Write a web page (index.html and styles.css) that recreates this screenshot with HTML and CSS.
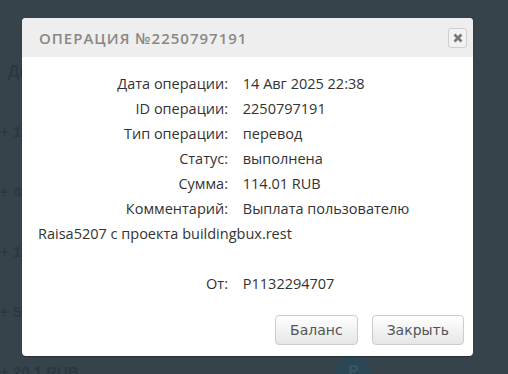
FILE: index.html
```html
<!DOCTYPE html>
<html lang="ru">
<head>
<meta charset="utf-8">
<title>Операция</title>
<link rel="stylesheet" href="styles.css">
</head>
<body>
<div class="page">
  <div class="bg-title">Дневник</div>
  <ul class="bg-list">
    <li>+ 114.01 RUB</li>
    <li>+ 45.2 RUB</li>
    <li>+ 114.01 RUB</li>
    <li>+ 55.1 RUB</li>
    <li>+ 20.1 RUB</li>
  </ul>
  <div class="bg-avatar">P</div>
</div>

<div class="modal">
  <div class="modal-header">
    <h3 class="modal-title">Операция №2250797191</h3>
    <button class="close" type="button" aria-label="Закрыть">
      <svg width="10" height="10" viewBox="0 0 10 10"><path d="M1.5 1.5 L8.5 8.5 M8.5 1.5 L1.5 8.5" stroke="#777" stroke-width="2.6" stroke-linecap="butt"/></svg>
    </button>
  </div>
  <div class="modal-body">
    <div class="row"><span class="label">Дата операции:</span> <span class="value">14 Авг 2025 22:38</span></div>
    <div class="row"><span class="label">ID операции:</span> <span class="value">2250797191</span></div>
    <div class="row"><span class="label">Тип операции:</span> <span class="value">перевод</span></div>
    <div class="row"><span class="label">Статус:</span> <span class="value">выполнена</span></div>
    <div class="row"><span class="label">Сумма:</span> <span class="value">114.01 RUB</span></div>
    <div class="row"><span class="label">Комментарий:</span> <span class="value">Выплата пользователю Raisa5207 с проекта buildingbux.rest</span></div>
    <div class="row empty"></div>
    <div class="row"><span class="label">От:</span> <span class="value">P1132294707</span></div>
  </div>
  <div class="modal-footer">
    <button class="btn" type="button">Баланс</button>
    <button class="btn" type="button">Закрыть</button>
  </div>
</div>
</body>
</html>
```
FILE: styles.css
```css
* { box-sizing: border-box; }
html, body { margin: 0; padding: 0; }
body {
  width: 508px;
  height: 374px;
  overflow: hidden;
  background: #36434b;
  font-family: "Open Sans", "Liberation Sans", sans-serif;
  position: relative;
}
.page {
  padding: 62px 0 0 8px;
  color: #2c3840;
  font-family: "Liberation Sans", sans-serif;
  font-weight: bold;
}
.bg-title { font-size: 16px; line-height: 20px; margin-left: 0; }
.bg-list { list-style: none; margin: 0; padding: 0; margin-left: -8px; }
.bg-list li { font-size: 15px; line-height: 20px; margin-top: 40px; }
.bg-avatar {
  position: absolute;
  left: 336px; top: 355px;
  width: 35px; height: 35px;
  border-radius: 50%;
  background: #2b4654;
  color: #3b5664;
  text-align: center;
  line-height: 30px;
  font-size: 15px;
}
.modal {
  position: absolute;
  left: 22px; top: 18px;
  width: 451px;
  background: #fff;
  border-radius: 4px;
  box-shadow: 0 1px 1px rgba(0,0,0,0.3);
  overflow: hidden;
}
.modal-header {
  height: 39px;
  background: #eeeeee;
  display: flex;
  align-items: center;
  justify-content: space-between;
  padding: 0 6px 0 17px;
}
.modal-title {
  margin: 0;
  font-size: 15px;
  font-weight: 600;
  letter-spacing: 1px;
  text-transform: uppercase;
  color: #8b8784;
}
.close {
  width: 19px; height: 20px;
  padding: 0;
  border: 1px solid #cfcfcf;
  border-radius: 3px;
  background: #f2f2f2;
  display: flex; align-items: center; justify-content: center;
}
.modal-body {
  padding: 14px 16px 0;
  font-size: 14.5px;
  line-height: 25px;
  color: #333;
}
.row { min-height: 25px; }
.label {
  display: inline-block;
  width: 190px;
  text-align: right;
  margin-right: 11px;
}
.modal-footer {
  display: flex;
  justify-content: flex-end;
  gap: 14px;
  padding: 19px 9px 11px;
}
.btn {
  height: 30px;
  padding: 0 14px;
  border: 1px solid #cccccc;
  border-radius: 4px;
  background: linear-gradient(#ffffff, #e6e6e6);
  color: #555;
  font-family: "DejaVu Sans", Verdana, sans-serif;
  font-size: 14px;
}
```
